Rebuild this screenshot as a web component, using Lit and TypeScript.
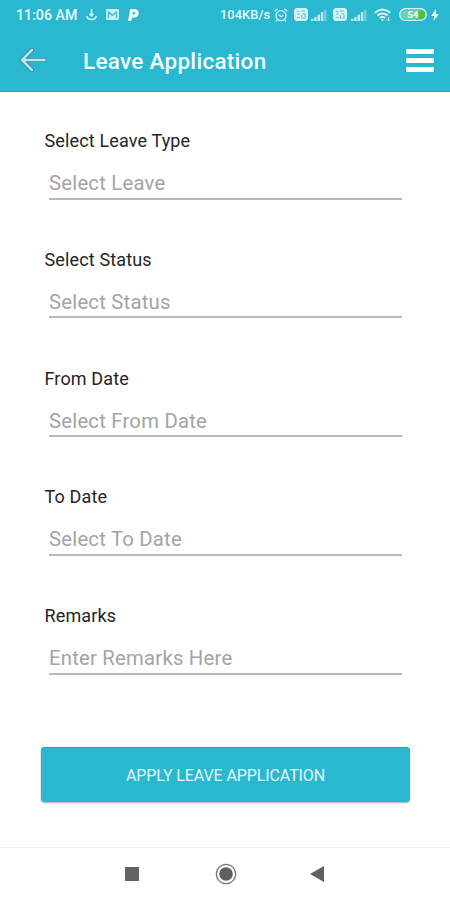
import { LitElement, html, css, svg } from "lit";
import { customElement, property } from "lit/decorators.js";

@customElement("leave-field")
class LeaveField extends LitElement {
  @property() label = "";
  @property() hint = "";

  static styles = css`
    :host { display: block; height: 118.75px; }
    .label { padding-left: 44.5px; height: 24px; line-height: 24px; font-size: 18px; letter-spacing: 0.14px; color: #252525; }
    .input { margin: 15px 48px 0 49px; height: 29.5px; line-height: 30px; font-size: 20.3px; letter-spacing: 0.22px; color: #a4a4a4; border-bottom: 2px solid #b9b9b9; white-space: nowrap; }
  `;

  render() {
    return html`<div class="label">${this.label}</div><div class="input">${this.hint}</div>`;
  }
}

const sim = (cls: string) => html`<svg class=${cls} width="14" height="13" viewBox="0 0 14 13">
  <path fill="#d6f4f9" d="M2 0h10l2 2v9l-2 2H2l-2-2V2z"/>
  <path d="M3 3.5h2.5M7 3h4M3 6h3M8 6h3v4H7.5V7M3 9.5h3" fill="none" stroke="#62c8da" stroke-width="1.1"/>
</svg>`;

const signal = (cls: string) => html`<svg class=${cls} width="16" height="12" viewBox="0 0 16 12">
  ${[2, 4, 6.5, 9].map((h, i) => svg`<rect x=${i * 3.3} y=${12 - h} width="2.4" height=${h} fill="#c8eff6"/>`)}
  <rect x="13.2" y="0.5" width="2.3" height="11.5" fill="#75cfdf"/>
</svg>`;

@customElement("app-root")
class AppRoot extends LitElement {
  static styles = css`
    :host { display: flex; flex-direction: column; width: 450px; height: 900px; background: #fefefe; font-family: Roboto, sans-serif; overflow: hidden; }
    svg { display: block; flex: none; }
    .status { display: flex; align-items: center; height: 29px; background: #2ab7d0; padding: 0 11px 0 16px; color: #e6fafd; box-sizing: border-box; white-space: nowrap; }
    .time { width: 70px; font-size: 14.2px; line-height: 17px; padding-top: 1px; font-weight: 500; }
    .rate { margin-left: auto; width: 54px; font-size: 12.8px; font-weight: 500; letter-spacing: 0.1px; }
    .mail { margin-left: 9px; }
    .park { margin-left: 9px; }
    .sim1 { margin-left: 6px; }
    .sig1 { margin-left: 3px; }
    .sim2 { margin-left: 6px; }
    .sig2 { margin-left: 4px; }
    .wifi { margin-left: 7px; }
    .battery { margin-left: 7px; }
    .bolt { margin-left: 4px; }
    .bar { display: flex; align-items: center; height: 63px; background: #2ab7d0; box-sizing: border-box; border-bottom: 1px solid #20abc5; padding: 0 16px 0 19px; }
    .title { margin-left: 36px; padding-top: 2px; font-size: 22.5px; font-weight: 500; letter-spacing: 0.28px; color: #f4fdff; flex: 1; white-space: nowrap; }
    .menu { display: flex; flex-direction: column; gap: 4px; margin-top: 1px; }
    .line { width: 28px; height: 5px; border-radius: 1px; background: #fff; }
    .form { padding-top: 37px; height: 618px; box-sizing: border-box; }
    .apply { margin: 37px 40px 0 41px; height: 55px; padding-top: 2px; box-sizing: border-box; border-radius: 4px; background: #2ab7d0; box-shadow: 0 1px 2px #0005, inset 0 1px 0 #18adc2; color: #e4f9fc; display: flex; align-items: center; justify-content: center; font-size: 16px; letter-spacing: -0.1px; white-space: nowrap; }
    .nav { margin-top: auto; height: 53px; box-sizing: border-box; border-top: 1px solid #f1f1f1; display: flex; align-items: center; padding-left: 125px; }
    .home { margin-left: 76px; }
    .back { margin-left: 73px; }
  `;

  render() {
    return html`
      <div class="status">
        <span class="time">11:06 AM</span>
        <svg width="11" height="12" viewBox="0 0 11 12" fill="none" stroke="#dff7fb" stroke-width="1.5"><path d="M5.5 0v6.5M3.4 4.8l2.1 2.1 2.1-2.1M.7 6.8C1.5 11.6 9.5 11.6 10.3 6.8"/></svg>
        <svg class="mail" width="13" height="11" viewBox="0 0 13 11"><rect width="13" height="11" rx="1" fill="#c8f0f6"/><path d="M2.5 9V3l4 3.3L10.5 3v6" fill="none" stroke="#43bfd5" stroke-width="1.3"/></svg>
        <svg class="park" width="11" height="12" viewBox="0 0 11 12"><path d="M2 0h4.500a4 4 0 0 1 0 8.500H4L3.200 12H0L1.500 4.500z" fill="#fff"/><path d="M4.800 3h1.300a1.300 1.300 0 0 1 0 2.600H4.300z" fill="#43bfd5"/></svg>
        <span class="rate">104KB/s</span>
        <svg width="14" height="14" viewBox="0 0 14 14" fill="none" stroke="#d9f5fa" stroke-width="1.3"><circle cx="7" cy="7.7" r="5"/><path d="M.7 3.2L3.5.8M13.3 3.2L10.5.8M4.5 6.8L7 8.8l2.5-1.6M3 12l-1 1.5M11 12l1 1.5"/></svg>
        ${sim("sim1")}${signal("sig1")}${sim("sim2")}${signal("sig2")}
        <svg class="wifi" width="18" height="14" viewBox="0 0 18 14" fill="none" stroke="#def7fb" stroke-width="1.9"><path d="M.8 4.8Q8.5-2 16.2 4.8M3.3 7.6q5.2-4.4 10.4 0M5.8 10q2.700-2 5.400 0"/><path d="M7 11.2h3l-1.500 2z" fill="#def7fb" stroke="none"/><path d="M14.500 9v4M13 11.500l1.500 1.500 1.500-1.500" stroke-width="1"/></svg>
        <svg class="battery" width="28" height="13" viewBox="0 0 28 13"><rect x=".7" y=".7" width="26.6" height="11.6" rx="5.8" fill="#43bdcb" stroke="#e4f9fb" stroke-width="1.3"/><path d="M6 2.500h13v8H6a4 4 0 0 1 0-8z" fill="#78cfae"/><path d="M19 2.500h3a4 4 0 0 1 0 8h-3z" fill="#48c92d"/><text x="14" y="10" text-anchor="middle" font-size="9.5" font-weight="700" fill="#edfff5">54</text></svg>
        <svg class="bolt" width="8" height="12" viewBox="0 0 8 12"><path d="M5 0L0 7h3L2.500 12 8 5H5z" fill="#e9fcff"/></svg>
      </div>
      <div class="bar">
        <svg width="28" height="26" viewBox="0 0 28 26" fill="none" stroke-linecap="round" stroke-linejoin="miter"><path d="M13 3L3 13l10 10M4 13h21.500" stroke="#3b7e8d" stroke-width="4.200"/><path d="M13 3L3 13l10 10M4 13h21.500" stroke="#bdeaf1" stroke-width="2.500"/></svg>
        <div class="title">Leave Application</div>
        <div class="menu"><div class="line"></div><div class="line"></div><div class="line"></div></div>
      </div>
      <div class="form">
        <leave-field label="Select Leave Type" hint="Select Leave"></leave-field>
        <leave-field label="Select Status" hint="Select Status"></leave-field>
        <leave-field label="From Date" hint="Select From Date"></leave-field>
        <leave-field label="To Date" hint="Select To Date"></leave-field>
        <leave-field label="Remarks" hint="Enter Remarks Here"></leave-field>
      </div>
      <div class="apply">APPLY LEAVE APPLICATION</div>
      <div class="nav">
        <svg width="14" height="14" viewBox="0 0 14 14"><rect width="14" height="14" fill="#626262"/></svg>
        <svg class="home" width="22" height="22" viewBox="0 0 22 22"><circle cx="11" cy="11" r="9.700" fill="none" stroke="#747474" stroke-width="1.300"/><circle cx="11" cy="11" r="6.800" fill="#606060"/></svg>
        <svg class="back" width="14" height="16" viewBox="0 0 14 16"><path d="M0 8L14 0v16z" fill="#606060"/></svg>
      </div>
    `;
  }
}
